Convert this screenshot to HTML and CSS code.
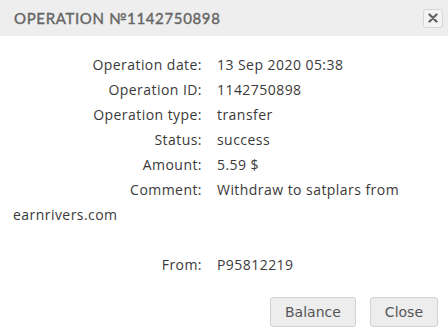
FILE: index.html
```html
<!DOCTYPE html>
<html>
<head>
<meta charset="utf-8">
<link rel="stylesheet" href="styles.css">
</head>
<body>
<div class="dialog">
  <div class="header">
    <div class="title">OPERATION №1142750898</div>
    <button class="x-btn" aria-label="close">
      <svg width="10" height="10" viewBox="0 0 10 10"><path d="M1.5 1.5 L8.5 8.5 M8.5 1.5 L1.5 8.5" stroke="#666" stroke-width="2.4" stroke-linecap="round"/></svg>
    </button>
  </div>
  <div class="body">
    <div class="row"><span class="lbl">Operation date:</span><span class="val">13 Sep 2020 05:38</span></div>
    <div class="row"><span class="lbl">Operation ID:</span><span class="val">1142750898</span></div>
    <div class="row"><span class="lbl">Operation type:</span><span class="val">transfer</span></div>
    <div class="row"><span class="lbl">Status:</span><span class="val">success</span></div>
    <div class="row"><span class="lbl">Amount:</span><span class="val">5.59 $</span></div>
    <div class="row"><span class="lbl">Comment:</span>Withdraw to satplars from earnrivers.com</div>
    <div class="row empty">&nbsp;</div>
    <div class="row"><span class="lbl">From:</span><span class="val">P95812219</span></div>
  </div>
  <div class="footer">
    <button class="btn">Balance</button>
    <button class="btn">Close</button>
  </div>
</div>
</body>
</html>
```
FILE: styles.css
```css
html, body {
  margin: 0;
  padding: 0;
  background: #fff;
}
.dialog {
  width: 448px;
  height: 336px;
  font-family: "Open Sans", "Liberation Sans", sans-serif;
}
.header {
  height: 36px;
  background: #eeeeee;
  display: flex;
  align-items: center;
  justify-content: space-between;
  padding: 0 5px 0 14px;
}
.title {
  font-family: "Lato", "DejaVu Sans", sans-serif;
  font-size: 15px;
  letter-spacing: 0.65px;
  color: #666;
  font-weight: 400;
  -webkit-text-stroke: 0.4px #666;
}
.x-btn {
  width: 20px;
  height: 19px;
  margin: 0;
  padding: 0;
  border: 1px solid #d6d6d6;
  border-radius: 3px;
  background: #f4f4f4;
  display: flex;
  align-items: center;
  justify-content: center;
}
.body {
  padding: 16px 13px 0 13px;
  color: #3a3a3a;
  font-size: 14px;
  line-height: 25px;
  letter-spacing: 0.45px;
}
.row {
  margin: 0;
}
.lbl {
  display: inline-block;
  width: 189px;
  text-align: right;
  margin-right: 15px;
}
.footer {
  display: flex;
  justify-content: flex-end;
  gap: 14px;
  padding: 20px 10px 0 0;
}
.btn {
  font-family: "DejaVu Sans", "Verdana", sans-serif;
  font-size: 14px;
  color: #555;
  background: #ededed;
  border: 1px solid #d3d3d3;
  border-radius: 3px;
  height: 30px;
  padding: 0 14px;
  margin: 0;
}
```
